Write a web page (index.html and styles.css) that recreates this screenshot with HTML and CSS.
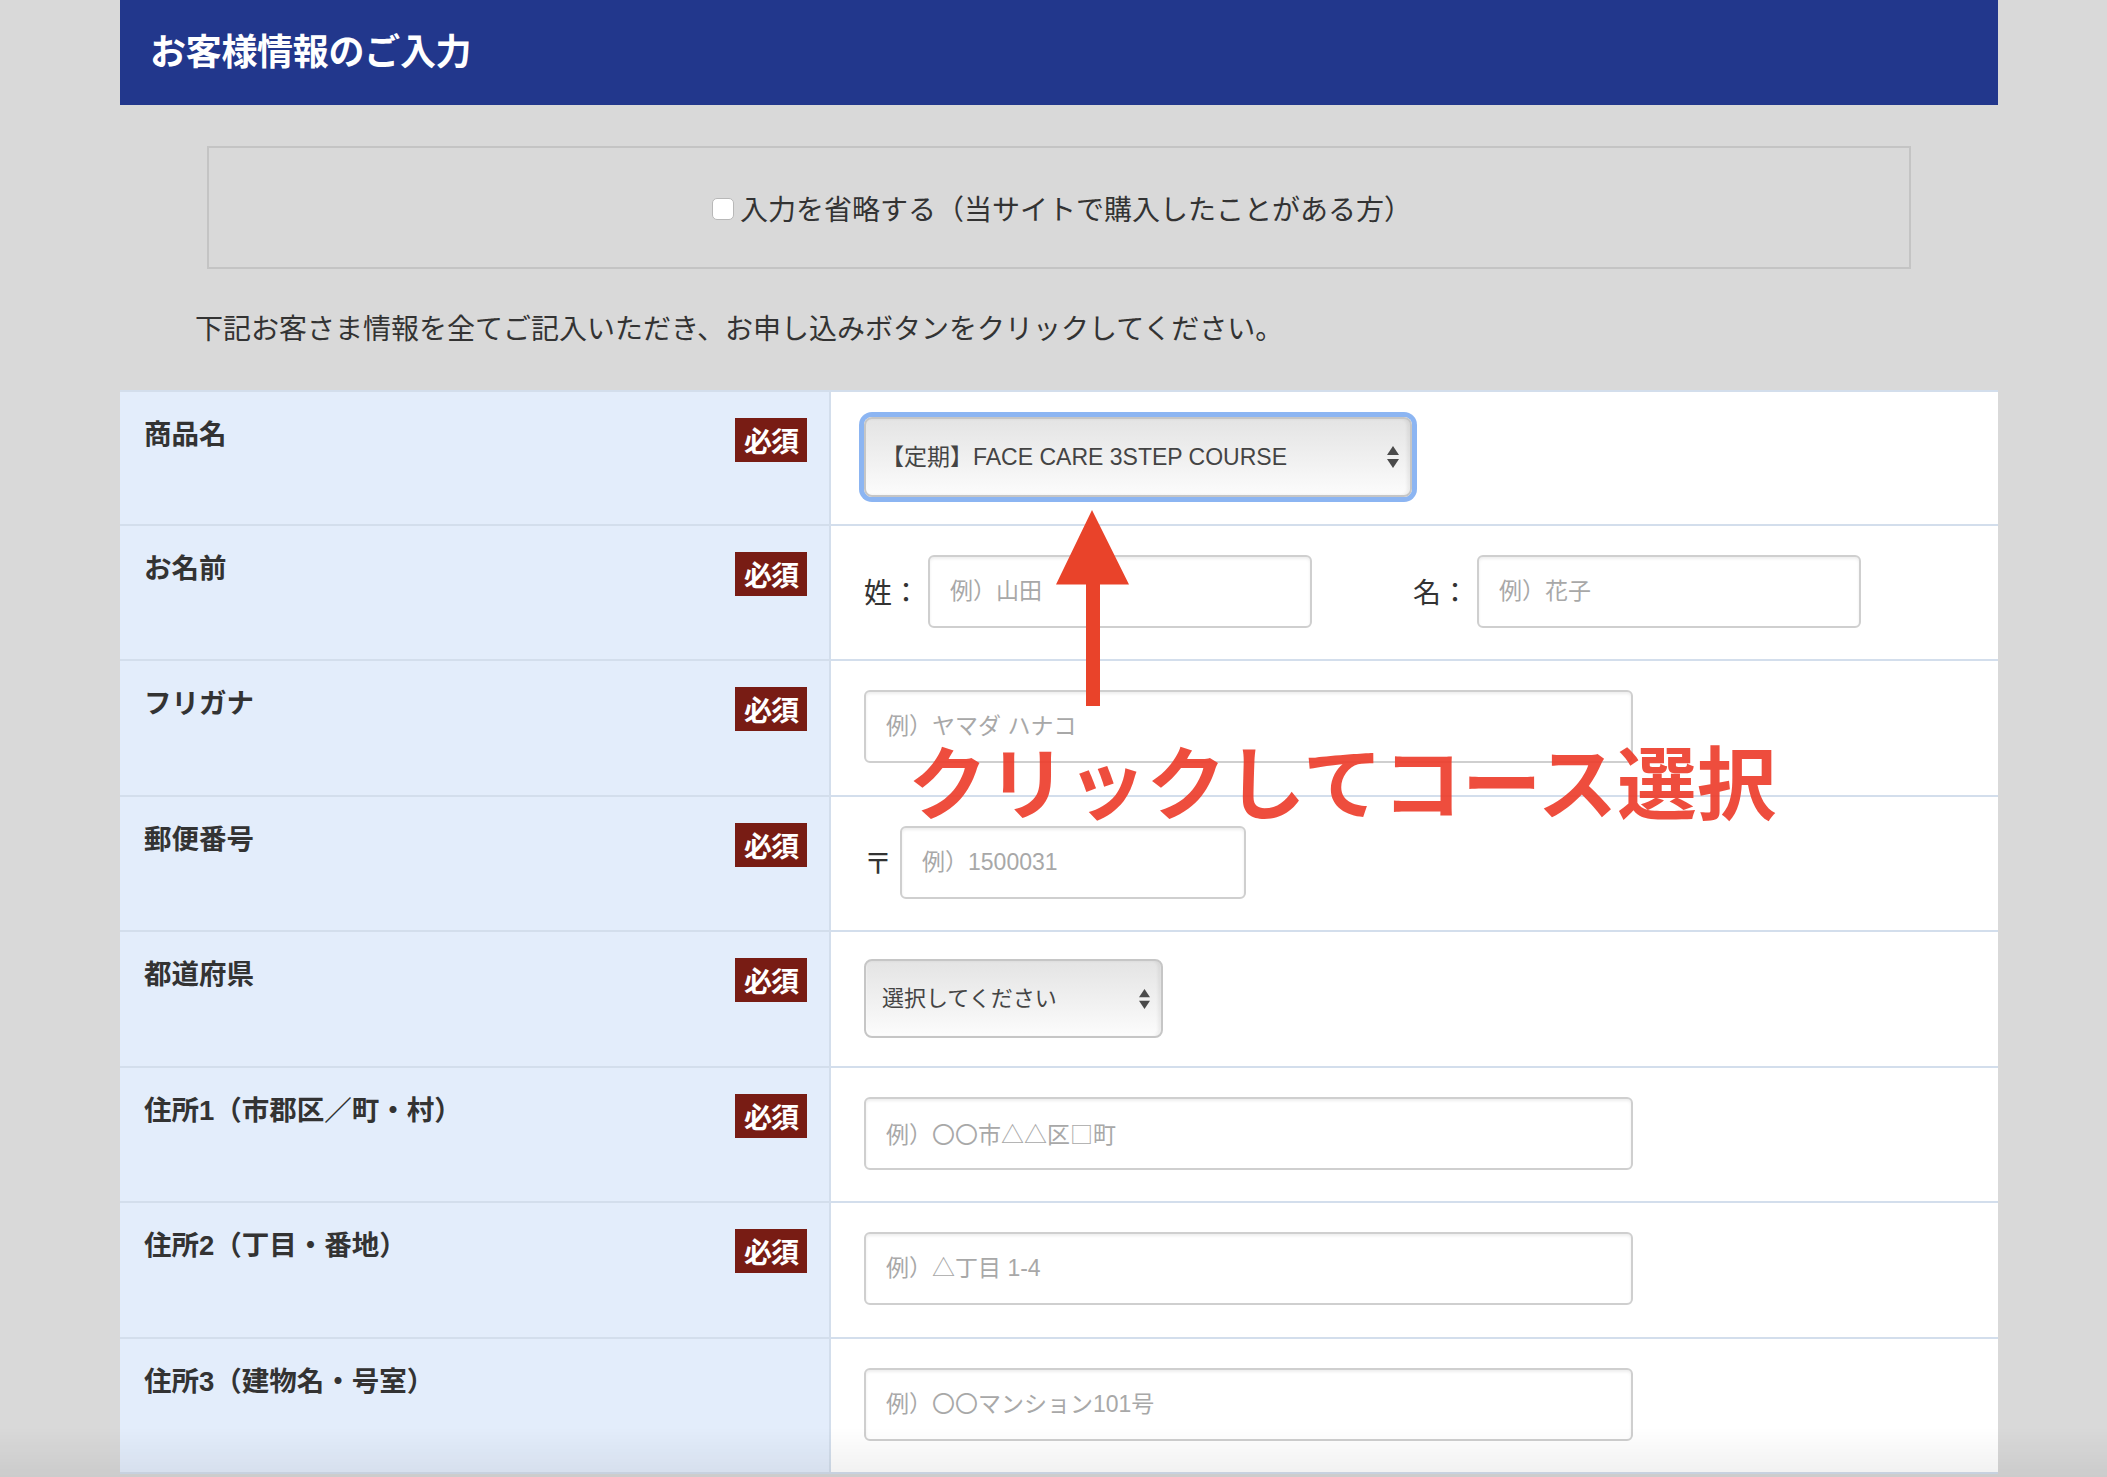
FILE: index.html
```html
<!DOCTYPE html>
<html lang="ja">
<head>
<meta charset="utf-8">
<title>お客様情報のご入力</title>
<link rel="stylesheet" href="styles.css">
</head>
<body>
<div class="page">
  <header class="head"><h1 class="head-title">お客様情報のご入力</h1></header>

  <div class="skip">
    <label class="skip-label"><input type="checkbox" class="skip-check">入力を省略する（当サイトで購入したことがある方）</label>
  </div>

  <p class="lead">下記お客さま情報を全てご記入いただき、お申し込みボタンをクリックしてください。</p>

  <div class="form">
    <div class="row">
      <div class="th"><span class="lbl">商品名</span><span class="req">必須</span></div>
      <div class="td">
        <div class="sel-wrap sel-course">
          <select class="sel sel-focus"><option>【定期】FACE CARE 3STEP COURSE</option></select>
          <svg class="sel-arrows" viewBox="0 0 12 22" width="12" height="22"><polygon points="6,0 12,9 0,9"/><polygon points="0,13 12,13 6,22"/></svg>
        </div>
      </div>
    </div>

    <div class="row">
      <div class="th"><span class="lbl">お名前</span><span class="req">必須</span></div>
      <div class="td">
        <div class="name-group">
          <span class="flabel">姓：</span><input class="inp inp-name" placeholder="例）山田">
          <span class="flabel flabel-second">名：</span><input class="inp inp-name" placeholder="例）花子">
        </div>
      </div>
    </div>

    <div class="row">
      <div class="th"><span class="lbl">フリガナ</span><span class="req">必須</span></div>
      <div class="td"><input class="inp inp-wide" placeholder="例）ヤマダ ハナコ"></div>
    </div>

    <div class="row">
      <div class="th"><span class="lbl">郵便番号</span><span class="req">必須</span></div>
      <div class="td">
        <div class="name-group"><span class="flabel">〒</span><input class="inp inp-zip" placeholder="例）1500031"></div>
      </div>
    </div>

    <div class="row">
      <div class="th"><span class="lbl">都道府県</span><span class="req">必須</span></div>
      <div class="td">
        <div class="sel-wrap sel-pref">
          <select class="sel sel-small"><option>選択してください</option></select>
          <svg class="sel-arrows" viewBox="0 0 12 22" width="11" height="21"><polygon points="6,0 12,9 0,9"/><polygon points="0,13 12,13 6,22"/></svg>
        </div>
      </div>
    </div>

    <div class="row">
      <div class="th"><span class="lbl">住所1（市郡区／町・村）</span><span class="req">必須</span></div>
      <div class="td"><input class="inp inp-wide inp-cjk" placeholder="例）〇〇市△△区□町"></div>
    </div>

    <div class="row">
      <div class="th"><span class="lbl">住所2（丁目・番地）</span><span class="req">必須</span></div>
      <div class="td"><input class="inp inp-wide" placeholder="例）△丁目 1-4"></div>
    </div>

    <div class="row">
      <div class="th"><span class="lbl">住所3（建物名・号室）</span></div>
      <div class="td"><input class="inp inp-wide" placeholder="例）〇〇マンション101号"></div>
    </div>
  </div>

  <svg class="callout-arrow" viewBox="0 0 85 205" width="85" height="205">
    <polygon points="42,5 79,79.5 50,79.5 50,201 36,201 36,79.5 6,79.5"/>
  </svg>
  <div class="callout">クリックしてコース選択</div>
</div>
<div class="fade"></div>
</body>
</html>
```

FILE: styles.css
```css
html, body {
  margin: 0;
  padding: 0;
}
body {
  background: #d9d9d9;
  font-family: "Liberation Sans", "Noto Sans CJK JP", sans-serif;
  color: #333;
  overflow: hidden;
}
.page {
  position: relative;
  width: 1878px;
  margin-left: 120px;
}
.head {
  height: 105px;
  background: #22378c;
  display: flex;
  align-items: center;
  padding: 0 0 7px 30px;
  box-sizing: border-box;
}
.head-title {
  margin: 0;
  color: #fff;
  font-family: "Noto Sans CJK JP", sans-serif;
  font-size: 36px;
  font-weight: 700;
  line-height: 1;
  letter-spacing: -0.3px;
}
.skip {
  margin: 41px 0 0 87px;
  width: 1704px;
  height: 123px;
  box-sizing: border-box;
  border: 2px solid #c4c4c4;
  display: flex;
  align-items: center;
  justify-content: center;
}
.skip-label {
  display: flex;
  align-items: center;
  font-family: "Noto Sans CJK JP", sans-serif;
  font-size: 28px;
  line-height: 36px;
  color: #333;
  margin-left: 6px;
}
.skip-check {
  appearance: none;
  -webkit-appearance: none;
  width: 22px;
  height: 22px;
  margin: 2px 6px 0 0;
  border: 1px solid #b8b8b8;
  border-radius: 5px;
  background: #fff;
  box-sizing: border-box;
}
.lead {
  margin: 38px 0 0;
  padding-left: 75px;
  font-family: "Noto Sans CJK JP", sans-serif;
  font-size: 28px;
  line-height: 40px;
  color: #333;
}
.form {
  margin-top: 42.5px;
  border-top: 2px solid #d3deec;
}
.row {
  display: flex;
  height: 135.5px;
  box-sizing: border-box;
  border-bottom: 2px solid #d3deec;
}
.row:first-child {
  height: 134px;
}
.th {
  width: 711px;
  box-sizing: border-box;
  background: #e3edfb;
  border-right: 2px solid #d3deec;
  display: flex;
  justify-content: space-between;
  align-items: flex-start;
  padding: 25px 22px 0 24px;
}
.lbl {
  font-size: 27.5px;
  font-weight: 700;
  line-height: 35px;
  color: #333;
}
.req {
  width: 72px;
  height: 44px;
  margin-top: 1px;
  background: #781c14;
  color: #fff;
  font-family: "Noto Sans CJK JP", sans-serif;
  font-size: 28px;
  font-weight: 700;
  line-height: 44px;
  text-align: center;
  letter-spacing: -1px;
}
.td {
  flex: 1;
  background: #fff;
  padding: 29px 0 0 33px;
}
.name-group {
  display: flex;
  align-items: center;
}
.flabel {
  font-family: "Noto Sans CJK JP", sans-serif;
  font-size: 28px;
  line-height: 36px;
  color: #333;
  margin-right: 8px;
}
.flabel-second {
  margin-left: 101px;
}
.inp {
  height: 73px;
  box-sizing: border-box;
  border: 2px solid #cfcfcf;
  border-radius: 6px;
  box-shadow: inset 0 2px 3px rgba(0, 0, 0, 0.07);
  background: #fff;
  font-family: "Liberation Sans", "Noto Sans CJK JP", sans-serif;
  font-size: 23px;
  padding: 0 20px;
  color: #333;
  outline: none;
  display: block;
}
.inp-cjk {
  font-family: "Noto Sans CJK JP", sans-serif;
}
.inp::placeholder {
  color: #a8a8a8;
}
.inp-name {
  width: 384px;
}
.inp-wide {
  width: 769px;
}
.inp-zip {
  width: 346px;
}
.sel-wrap {
  position: relative;
  margin-top: -4px;
}
.sel-course {
  width: 548px;
}
.sel-pref {
  width: 299px;
  margin-top: -2px;
}
.sel {
  appearance: none;
  -webkit-appearance: none;
  display: block;
  width: 100%;
  box-sizing: border-box;
  border: 2px solid #c6c6c6;
  border-radius: 8px;
  background: linear-gradient(#e4e4e4, #f2f2f2 60%, #fcfcfc);
  box-shadow: inset -3px 0 3px rgba(0, 0, 0, 0.06), inset 0 -2px 2px rgba(255, 255, 255, 0.9);
  font-family: "Liberation Sans", "Noto Sans CJK JP", sans-serif;
  color: #444;
  outline: none;
}
.sel-focus {
  height: 80px;
  font-size: 23px;
  padding: 0 40px 0 15px;
  box-shadow: 0 0 0 5px #8cb5f2, inset -3px 0 3px rgba(0, 0, 0, 0.06);
}
.sel-small {
  height: 79px;
  font-size: 22px;
  padding: 0 40px 0 16px;
}
.sel-arrows {
  position: absolute;
  top: 50%;
  transform: translateY(-50%);
  right: 13px;
  fill: #4a4a4a;
}
.callout-arrow {
  position: absolute;
  left: 930px;
  top: 505px;
  fill: #e9432a;
}
.callout {
  position: absolute;
  left: 788px;
  top: 739px;
  font-family: "Noto Sans CJK JP", sans-serif;
  font-size: 79.5px;
  font-weight: 700;
  line-height: 1;
  white-space: nowrap;
  color: rgba(236, 58, 40, 0.9);
}
.fade {
  position: fixed;
  left: 0;
  right: 0;
  bottom: 0;
  height: 50px;
  background: linear-gradient(rgba(0, 0, 0, 0), rgba(0, 0, 0, 0.06));
  pointer-events: none;
}
```
